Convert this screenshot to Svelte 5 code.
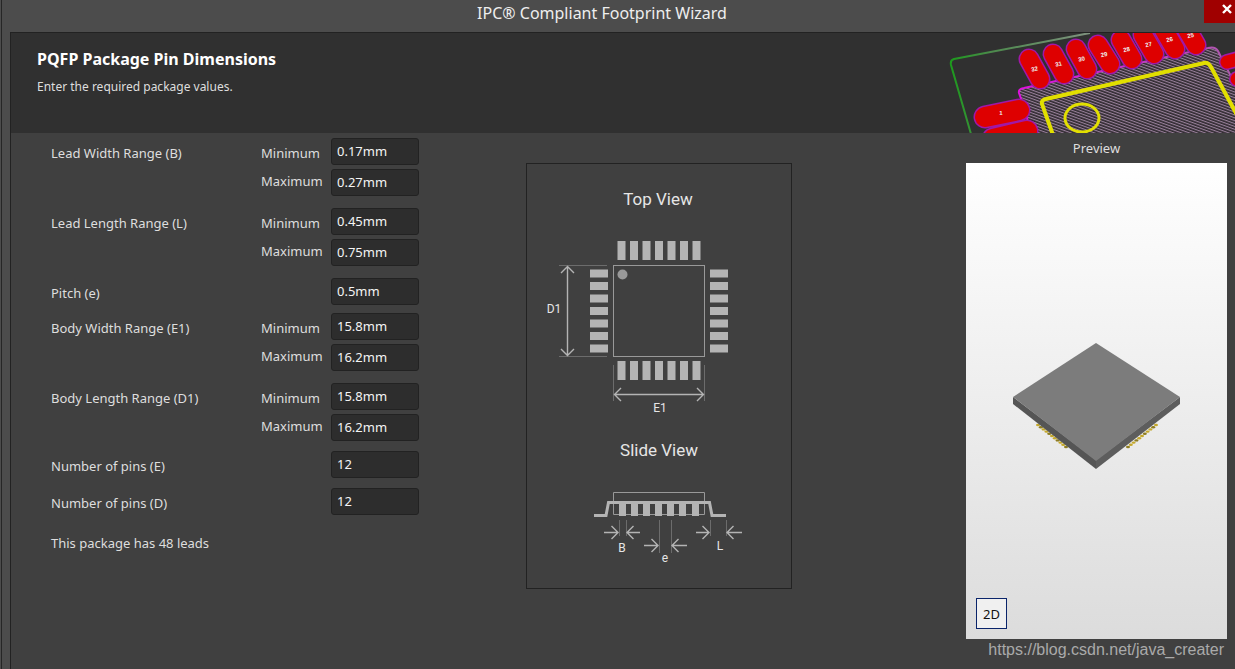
<script lang="ts">
  let groups = [
    { id: "b", name: "Lead Width Range (B)", gap: "normal", min: "0.17mm", max: "0.27mm" },
    { id: "l", name: "Lead Length Range (L)", gap: "normal", min: "0.45mm", max: "0.75mm" },
    { id: "e", name: "Pitch (e)", gap: "small", value: "0.5mm" },
    { id: "e1", name: "Body Width Range (E1)", gap: "normal", min: "15.8mm", max: "16.2mm" },
    { id: "d1", name: "Body Length Range (D1)", gap: "medium", min: "15.8mm", max: "16.2mm" },
    { id: "pe", name: "Number of pins (E)", gap: "medium", value: "12" },
    { id: "pd", name: "Number of pins (D)", gap: "large", value: "12" },
  ];
  const seven = [0, 1, 2, 3, 4, 5, 6];

  // pads along the top of the banner chip: x, y of the two cap centres
  const pads = [
    { n: 32, x1: 89, y1: 26, x2: 100, y2: 46 },
    { n: 31, x1: 113, y1: 21, x2: 124, y2: 41 },
    { n: 30, x1: 136, y1: 16, x2: 147, y2: 36 },
    { n: 29, x1: 158, y1: 12, x2: 170, y2: 31 },
    { n: 28, x1: 181, y1: 7, x2: 192, y2: 26 },
    { n: 27, x1: 203, y1: 2, x2: 214, y2: 21 },
    { n: 26, x1: 224, y1: -3, x2: 235, y2: 16 },
    { n: 25, x1: 245, y1: -7, x2: 256, y2: 12 },
  ];
  const balls = [0, 1, 2, 3, 4, 5, 6, 7, 8, 9, 10];
</script>

<div class="window">
  <header class="titlebar">
    <h1>IPC® Compliant Footprint Wizard</h1>
    <button class="close" aria-label="Close">
      <svg width="10" height="10" viewBox="0 0 10 10"><path d="M1 1L9 9M9 1L1 9" stroke="#fff" stroke-width="2.4" /></svg>
    </button>
  </header>

  <main class="panel">
    <div class="banner">
      <div class="intro">
        <h2>PQFP Package Pin Dimensions</h2>
        <p>Enter the required package values.</p>
      </div>
      <svg class="art" width="295" height="100" viewBox="0 0 295 100">
        <defs>
          <pattern id="hatch" width="8" height="2.7" patternUnits="userSpaceOnUse" patternTransform="rotate(20)">
            <rect width="8" height="2.7" fill="#302a30" />
            <rect width="8" height="1.1" fill="#98809a" />
          </pattern>
          <linearGradient id="edge" x1="0" y1="0" x2="1" y2="0">
            <stop offset="0" stop-color="#1d9a1d" />
            <stop offset="0.3" stop-color="#4d8a4d" />
            <stop offset="1" stop-color="#7f927f" />
          </linearGradient>
          <linearGradient id="court" x1="0" y1="0" x2="1" y2="0">
            <stop offset="0" stop-color="#e010e0" />
            <stop offset="1" stop-color="#a860a8" />
          </linearGradient>
        </defs>
        <path d="M31 101L11 32Q10 27 14 26L150 0" fill="none" stroke="url(#edge)" stroke-width="2" />
        <path d="M92 110L86 80L79 60Q78 56 84 55L268 15Q275 13 278 18L282 26L310 80V110Z" fill="url(#hatch)" stroke="url(#court)" stroke-width="2" />
        {#each pads as pad}
          <path d="M{pad.x1} {pad.y1}L{pad.x2} {pad.y2}" stroke="#a018a8" stroke-width="21" stroke-linecap="round" />
          <path d="M{pad.x1} {pad.y1}L{pad.x2} {pad.y2}" stroke="#de0000" stroke-width="18" stroke-linecap="round" />
          <text
            x={(pad.x1 + pad.x2) / 2}
            y={(pad.y1 + pad.y2) / 2 + 2}
            transform="rotate(-13 {(pad.x1 + pad.x2) / 2} {(pad.y1 + pad.y2) / 2})">{pad.n}</text>
        {/each}
        <g stroke-linecap="round">
          <path d="M45 84L79 77M53 106L87 98" stroke="#a018a8" stroke-width="23" />
          <path d="M45 84L79 77M53 106L87 98" stroke="#de0000" stroke-width="20" />
          <path d="M287 29L302 25M297 46L310 44" stroke="#a018a8" stroke-width="16" />
          <path d="M287 29L302 25M297 46L310 44" stroke="#de0000" stroke-width="13" />
        </g>
        <text x="61" y="82">1</text>
        <path d="M113 102L102 71Q101 67 106 66L264 30Q268 29 271 34L297 82" fill="none" stroke="#e2df00" stroke-width="4" />
        <ellipse cx="142" cy="85" rx="17" ry="14" fill="none" stroke="#e2df00" stroke-width="3" />
      </svg>
    </div>

    <div class="content">
      <form class="fields">
        {#each groups as group}
          <fieldset class="group {group.gap}">
            {#if group.min}
              <div class="name">{group.name}</div>
              <div class="limits">
                <label for="{group.id}-min">Minimum</label>
                <label for="{group.id}-max">Maximum</label>
              </div>
              <div class="inputs">
                <input id="{group.id}-min" type="text" bind:value={group.min} />
                <input id="{group.id}-max" type="text" bind:value={group.max} />
              </div>
            {:else}
              <label class="name wide" for={group.id}>{group.name}</label>
              <div class="inputs">
                <input id={group.id} type="text" bind:value={group.value} />
              </div>
            {/if}
          </fieldset>
        {/each}
        <p class="total">This package has 48 leads</p>
      </form>

      <figure class="diagram">
        <svg width="264" height="424" viewBox="527 164 264 424">
          <text class="caption" x="658" y="205">Top View</text>
          <g fill="#b4b4b4">
            {#each seven as i}
              <rect x={617.5 + i * 12.5} y="241" width="8" height="19" />
              <rect x={617.5 + i * 12.5} y="361" width="8" height="19" />
              <rect x="590" y={269.5 + i * 12.5} width="18" height="8" />
              <rect x="710" y={269.5 + i * 12.5} width="18" height="8" />
            {/each}
          </g>
          <rect x="613.5" y="265.5" width="91" height="91" class="line" />
          <circle cx="622.5" cy="274.5" r="5" fill="#999" />
          <path class="guide" d="M559 265.5H607M559 356.5H607M613.5 365V401M704.5 365V401" />
          <path class="arrow" d="M567.5 267V355M561 273L567.5 266.5L574 273M561 349L567.5 355.5L574 349" />
          <path class="arrow" d="M615 394.5H703M621 388L614.5 394.5L621 401M697 388L703.5 394.5L697 401" />
          <text class="dim" x="554" y="313">D1</text>
          <text class="dim" x="660" y="412">E1</text>

          <text class="caption" x="659" y="456">Slide View</text>
          <path class="line" d="M613.5 514.5V492.5H704.5V514.5Z" />
          <path d="M594 515.5H606L608.5 502.5H709.5L712 515.5H726" fill="none" stroke="#b4b4b4" stroke-width="3" />
          {#each [619, 631, 643, 655, 667, 679, 692] as x}
            <rect {x} y="502" width="7" height="14" fill="#b4b4b4" />
          {/each}
          <path class="guide" d="M619.5 520V536M626.5 520V536M659.5 520V553M671.5 520V553M710.5 520V536M726.5 520V536" />
          <path class="arrow" d="M604 532.5H618M611.5 526L618 532.5L611.5 539M640 532.5H627M633.5 526L627 532.5L633.5 539" />
          <path class="arrow" d="M644 545.5H658M651.5 539L658 545.5L651.5 552M687 545.5H672M678.5 539L672 545.5L678.5 552" />
          <path class="arrow" d="M696 532.5H709M702.5 526L709 532.5L702.5 539M742 532.5H727M733.5 526L727 532.5L733.5 539" />
          <text class="dim" x="622" y="552">B</text>
          <text class="dim" x="665" y="562">e</text>
          <text class="dim" x="720" y="550">L</text>
        </svg>
      </figure>

      <section class="preview">
        <h3>Preview</h3>
        <div class="view">
          <svg class="model" width="170" height="128" viewBox="0 0 170 128">
            {#each balls as i}
              <ellipse cx={26 + i * 2.8} cy={83 + i * 2.2} rx="2" ry="1.2" fill={i % 3 == 1 ? "#8f7d20" : "#c4a82c"} />
              <ellipse cx={144 - i * 2.8} cy={83 + i * 2.2} rx="2" ry="1.2" fill={i % 3 == 1 ? "#8f7d20" : "#c4a82c"} />
            {/each}
            <path d="M1 55L84 118V127L1 62Z" fill="#555" />
            <path d="M168 55L84 118V127L168 62Z" fill="#5d5d5d" />
            <path d="M84 1L168 55L84 119L1 55Z" fill="#7c7c7c" />
          </svg>
          <button class="mode">2D</button>
        </div>
        <p class="watermark">https://blog.csdn.net/java_creater</p>
      </section>
    </div>
  </main>
</div>

<style>
  :global(body) {
    margin: 0;
    background: #4c4c4c;
  }
  .window {
    box-sizing: border-box;
    min-height: 100vh;
    margin-left: 1px;
    padding-left: 8px;
    border-left: 1px solid #262626;
    display: flex;
    flex-direction: column;
    overflow: hidden;
    font-family: "Noto Sans", "Open Sans", sans-serif;
    font-size: 13px;
    line-height: 18px;
    color: #dedede;
  }
  h1, h2, h3, p, figure, fieldset {
    margin: 0;
    padding: 0;
    border: 0;
  }
  .titlebar {
    display: flex;
    align-items: flex-start;
    height: 32px;
  }
  h1 {
    flex: 1;
    padding: 3px 10px 0 0;
    font-size: 16px;
    font-weight: 400;
    line-height: 20px;
    text-align: center;
    color: #eee;
  }
  .close {
    width: 31px;
    height: 23px;
    padding: 0 0 6px 14px;
    border: 0;
    background: #a00000;
    line-height: 0;
  }
  .panel {
    flex: 1;
    border-top: 1px solid #222;
    border-left: 1px solid #222;
    background: #404040;
  }
  .banner {
    display: flex;
    justify-content: space-between;
    height: 100px;
    background: #303030;
  }
  .intro {
    padding: 16px 0 0 26px;
  }
  .intro p {
    font-size: 12px;
  }
  h2 {
    margin-bottom: 9px;
    font-size: 16px;
    line-height: 20px;
    color: #fff;
  }
  .art text {
    font: bold 6px "Liberation Sans", sans-serif;
    text-anchor: middle;
    fill: #eee;
  }
  .content {
    display: flex;
    align-items: flex-start;
    padding: 5px 8px 0 40px;
  }
  .group {
    display: flex;
    min-width: 0;
  }
  .normal {
    margin-bottom: 12px;
  }
  .small {
    margin-bottom: 8px;
  }
  .medium {
    margin-bottom: 10px;
  }
  .large {
    margin-bottom: 19px;
  }
  .name {
    width: 210px;
    padding-top: 6px;
  }
  .wide {
    width: 280px;
  }
  .limits {
    display: flex;
    flex-direction: column;
    gap: 10px;
    width: 70px;
    padding-top: 6px;
  }
  .inputs {
    display: flex;
    flex-direction: column;
    gap: 4px;
  }
  input {
    box-sizing: border-box;
    width: 88px;
    height: 27px;
    padding: 0 5px 2px;
    border: 1px solid #222;
    border-radius: 3px;
    background: #2d2d2d;
    font: inherit;
    color: #f4f4f4;
  }
  .diagram {
    margin: 25px 20px 0 107px;
    border: 1px solid #222;
    line-height: 0;
  }
  .diagram text {
    font-family: Roboto, sans-serif;
    text-anchor: middle;
    fill: #e6e6e6;
  }
  .diagram .caption {
    font-size: 17px;
  }
  .diagram .dim {
    font-size: 12px;
  }
  .line {
    fill: none;
    stroke: #999;
  }
  .guide {
    fill: none;
    stroke: #6c6c6c;
  }
  .arrow {
    fill: none;
    stroke: #b4b4b4;
    stroke-width: 1.4;
  }
  .preview {
    width: 261px;
    margin-left: auto;
  }
  h3 {
    padding: 1px 0 6px;
    font-size: 13px;
    font-weight: 400;
    text-align: center;
  }
  .view {
    display: flex;
    flex-direction: column;
    align-items: center;
    justify-content: space-between;
    box-sizing: border-box;
    height: 476px;
    padding: 179px 10px 10px;
    background: linear-gradient(#fff, #dcdcdc);
  }
  .mode {
    align-self: flex-start;
    width: 31px;
    height: 31px;
    padding: 0;
    border: 1px solid #0a246a;
    background: #f0f0f0;
    font: inherit;
    color: #111;
  }
  .watermark {
    padding: 2px 3px 0 0;
    font-family: "Liberation Sans", sans-serif;
    font-size: 16px;
    text-align: right;
    color: #aaa;
  }
</style>
